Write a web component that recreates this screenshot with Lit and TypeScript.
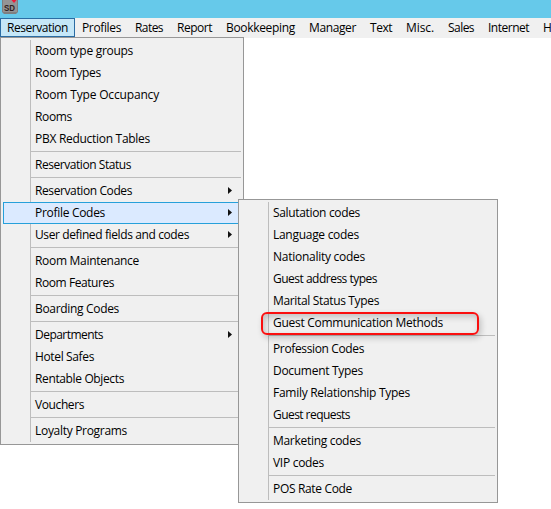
import { LitElement, html, css, svg, nothing } from "lit";
import { customElement, property } from "lit/decorators.js";

interface Entry {
  label: string;
  width: number;
  submenu?: boolean;
  active?: boolean;
  marked?: boolean;
}

const FONT = '12px "Open Sans"';
const pen = document.createElement("canvas").getContext("2d")!;

/** Letter spacing that makes a label take up the given width. */
function tracking(label: string, width: number): string {
  pen.font = FONT;
  const natural = pen.measureText(label).width;
  return `letter-spacing:${((width - natural) / label.length).toFixed(3)}px`;
}

const BAR: Entry[] = [
  { label: "Reservation", width: 61, active: true },
  { label: "Profiles", width: 39 },
  { label: "Rates", width: 28 },
  { label: "Report", width: 35 },
  { label: "Bookkeeping", width: 69 },
  { label: "Manager", width: 47 },
  { label: "Text", width: 22 },
  { label: "Misc.", width: 28 },
  { label: "Sales", width: 26 },
  { label: "Internet", width: 41 },
  { label: "H", width: 9 },
];

const RESERVATION: Entry[][] = [
  [
    { label: "Room type groups", width: 98 },
    { label: "Room Types", width: 66 },
    { label: "Room Type Occupancy", width: 124 },
    { label: "Rooms", width: 37 },
    { label: "PBX Reduction Tables", width: 115 },
  ],
  [{ label: "Reservation Status", width: 96 }],
  [
    { label: "Reservation Codes", width: 97, submenu: true },
    { label: "Profile Codes", width: 70, submenu: true, active: true },
    { label: "User defined fields and codes", width: 154, submenu: true },
  ],
  [
    { label: "Room Maintenance", width: 104 },
    { label: "Room Features", width: 79 },
  ],
  [{ label: "Boarding Codes", width: 84 }],
  [
    { label: "Departments", width: 68, submenu: true },
    { label: "Hotel Safes", width: 59 },
    { label: "Rentable Objects", width: 89 },
  ],
  [{ label: "Vouchers", width: 49 }],
  [{ label: "Loyalty Programs", width: 92 }],
];

const PROFILE_CODES: Entry[][] = [
  [
    { label: "Salutation codes", width: 87 },
    { label: "Language codes", width: 86 },
    { label: "Nationality codes", width: 92 },
    { label: "Guest address types", width: 104 },
    { label: "Marital Status Types", width: 106 },
    { label: "Guest Communication Methods", width: 170, marked: true },
  ],
  [
    { label: "Profession Codes", width: 91 },
    { label: "Document Types", width: 90 },
    { label: "Family Relationship Types", width: 137 },
    { label: "Guest requests", width: 77 },
  ],
  [
    { label: "Marketing codes", width: 88 },
    { label: "VIP codes", width: 51 },
  ],
  [{ label: "POS Rate Code", width: 79 }],
];

@customElement("popup-menu")
export class PopupMenu extends LitElement {
  @property({ attribute: false }) groups: Entry[][] = [];

  static styles = css`
    :host {
      display: block;
      box-sizing: border-box;
      border: 1px solid #979797;
      background: #f0f0f0;
      padding: 2px;
    }
    .items {
      background: linear-gradient(#bdbdbd, #bdbdbd) 27px 0 / 1px 100% no-repeat;
    }
    .rule {
      height: 1px;
      margin: 1px 0 2px 28px;
      background: #bdbdbd;
    }
    .item {
      display: flex;
      align-items: center;
      justify-content: space-between;
      box-sizing: border-box;
      height: 22px;
      padding: 0 8px 0 32px;
      position: relative;
      white-space: nowrap;
    }
    .item.active {
      background: #dbeaff;
      border: 1px solid #26a0da;
      padding: 0 7px 0 31px;
    }
    .arrow {
      display: block;
      width: 5px;
      height: 8px;
    }
    .mark {
      position: absolute;
      left: 20px;
      top: 0;
      width: 218px;
      height: 23px;
      box-sizing: border-box;
      border: 2px solid #fa0f0f;
      border-radius: 6px;
      box-shadow: 2px 3px 6px rgba(0, 0, 0, 0.2), inset 2px 3px 6px rgba(0, 0, 0, 0.2);
    }
    .label {
      position: relative;
    }
  `;

  private item(e: Entry) {
    return html`<div class="item ${e.active ? "active" : ""}">
      ${e.marked ? html`<div class="mark"></div>` : nothing}
      <span class="label" style=${tracking(e.label, e.width)}>${e.label}</span>
      ${e.submenu
        ? html`<svg class="arrow" viewBox="0 0 5 8">${svg`<path d="M0 0L4 3.5L0 7Z" fill="#111"/>`}</svg>`
        : nothing}
    </div>`;
  }

  render() {
    return html`<div class="items">
      ${this.groups.map(
        (g, i) => html`${i ? html`<div class="rule"></div>` : nothing}${g.map((e) => this.item(e))}`
      )}
    </div>`;
  }
}

@customElement("app-root")
export class AppRoot extends LitElement {
  static styles = css`
    :host {
      display: block;
      position: relative;
      width: 551px;
      height: 509px;
      overflow: hidden;
      background: #fff;
      color: #000;
      font: 12px/16px "Open Sans", "Noto Sans", sans-serif;
    }
    .title {
      height: 18px;
      padding-left: 2px;
      background: #66c9ea;
    }
    .logo {
      display: block;
      width: 16px;
      height: 14px;
    }
    .bar {
      display: flex;
      height: 20px;
      background: #f0f0f0;
    }
    .entry {
      flex: none;
      box-sizing: border-box;
      height: 19px;
      padding: 2px 7px 0;
      white-space: nowrap;
    }
    .entry.active {
      background: #c5e7f8;
      border: 1px solid #2b6ca3;
      padding: 1px 6px 0;
    }
    .text {
      display: block;
    }
    .reservation {
      position: absolute;
      left: 0;
      top: 37px;
      width: 244px;
    }
    .profile {
      position: absolute;
      left: 238px;
      top: 199px;
      width: 260px;
    }
  `;

  render() {
    return html`
      <div class="title">
        <svg class="logo" viewBox="0 0 16 14">
          <path d="M0 0H16V12L14 14H2L0 12Z" fill="#7f7f80" />
          <path d="M1 0H15V12H1Z" fill="#949495" />
          <path d="M9.5 0H14.5L12 3Z" fill="#f01838" />
          <text x="2" y="11" font-family="Liberation Sans" font-size="9.5" font-weight="700" textLength="11" lengthAdjust="spacingAndGlyphs" fill="#302020">SD</text>
        </svg>
      </div>
      <div class="bar">
        ${BAR.map(
          (e) => html`<div class="entry ${e.active ? "active" : ""}" style="width:${e.width + 14}px">
            <span class="text" style=${tracking(e.label, e.width)}>${e.label}</span>
          </div>`
        )}
      </div>
      <popup-menu class="reservation" .groups=${RESERVATION}></popup-menu>
      <popup-menu class="profile" .groups=${PROFILE_CODES}></popup-menu>
    `;
  }
}
